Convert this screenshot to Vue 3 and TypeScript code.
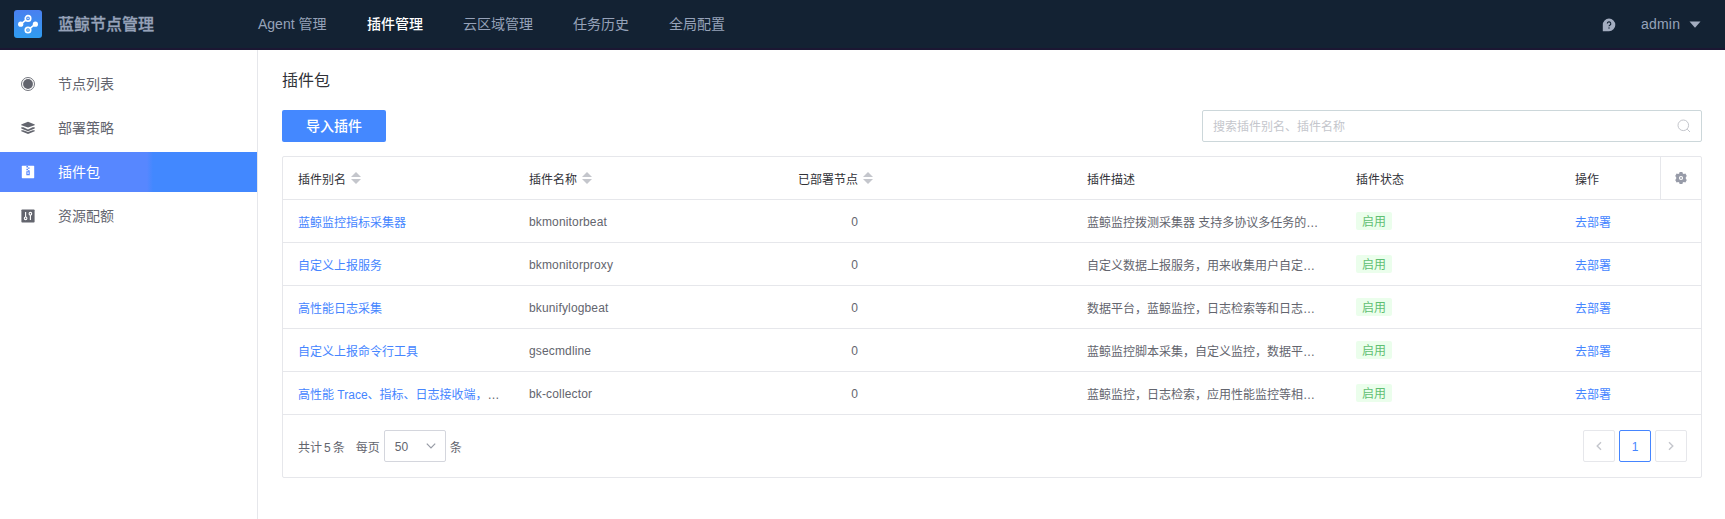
<script setup lang="ts">
interface Plugin {
  alias: string
  clipped?: boolean
  name: string
  nodes: number
  desc: string
}

const navs: string[] = ['Agent 管理', '插件管理', '云区域管理', '任务历史', '全局配置']
const activeNav = '插件管理'

const menus = [
  { icon: 'node', label: '节点列表' },
  { icon: 'strategy', label: '部署策略' },
  { icon: 'package', label: '插件包' },
  { icon: 'quota', label: '资源配额' },
]
const activeMenu = 'package'

const plugins: Plugin[] = [
  { alias: '蓝鲸监控指标采集器', name: 'bkmonitorbeat', nodes: 0, desc: '蓝鲸监控拨测采集器 支持多协议多任务的…' },
  { alias: '自定义上报服务', name: 'bkmonitorproxy', nodes: 0, desc: '自定义数据上报服务，用来收集用户自定…' },
  { alias: '高性能日志采集', name: 'bkunifylogbeat', nodes: 0, desc: '数据平台，蓝鲸监控，日志检索等和日志…' },
  { alias: '自定义上报命令行工具', name: 'gsecmdline', nodes: 0, desc: '蓝鲸监控脚本采集，自定义监控，数据平…' },
  { alias: '高性能 Trace、指标、日志接收端，', clipped: true, name: 'bk-collector', nodes: 0, desc: '蓝鲸监控，日志检索，应用性能监控等相…' },
]
</script>

<template>
  <div class="page">
    <header class="topbar">
      <div class="brand">
        <svg class="logo" width="28" height="28" viewBox="0 0 28 28">
          <defs>
            <linearGradient id="logoBg" x1="0" y1="0" x2="0" y2="1">
              <stop offset="0" stop-color="#4a80f0" />
              <stop offset="1" stop-color="#2f9cf0" />
            </linearGradient>
          </defs>
          <rect width="28" height="28" rx="3" fill="url(#logoBg)" />
          <g fill="none" stroke="#fff" stroke-width="1.7">
            <path d="M6.8 14.2 L11.8 10.2 M16.2 18.2 L21.4 14.2" />
            <circle cx="14" cy="8.4" r="2.7" />
            <circle cx="14" cy="20" r="2.7" />
          </g>
          <circle cx="14" cy="8.4" r="0.8" fill="#dbe9ff" />
          <circle cx="14" cy="20" r="0.8" fill="#dbe9ff" />
          <circle cx="6.7" cy="14.2" r="2.6" fill="#fff" />
          <circle cx="21.4" cy="14.2" r="2.6" fill="#fff" />
        </svg>
        <span class="brand-name">蓝鲸节点管理</span>
      </div>
      <nav class="nav">
        <a v-for="n in navs" :key="n" :class="{ active: n === activeNav }">{{ n }}</a>
      </nav>
      <div class="user">
        <svg class="help" width="14" height="14" viewBox="0 0 14 14">
          <path d="M7 0.6A6.3 6.3 0 1 1 7 13.2H0.8V7A6.3 6.3 0 0 1 7 0.6Z" fill="#a3adc0" />
          <path d="M5.3 5.6a1.75 1.75 0 1 1 2.5 1.6c-.6.3-.8.5-.8 1.1" fill="none" stroke="#132233" stroke-width="1.1" />
          <circle cx="7" cy="10" r="0.7" fill="#132233" />
        </svg>
        <span class="username">admin</span>
        <svg class="caret" width="12" height="7" viewBox="0 0 12 7"><path d="M0.5 0.5h11L6 6.8z" fill="#a3adc0" /></svg>
      </div>
    </header>

    <div class="body">
      <aside class="sidebar">
        <a v-for="m in menus" :key="m.icon" class="menu" :class="{ active: m.icon === activeMenu }">
          <svg width="14" height="14" viewBox="0 0 14 14">
            <template v-if="m.icon === 'node'">
              <circle cx="7" cy="7" r="6.5" fill="none" stroke="#63656e" stroke-width="0.9" />
              <circle cx="7" cy="7" r="4.9" fill="#63656e" />
            </template>
            <template v-else-if="m.icon === 'strategy'">
              <path d="M7 0.8 13.8 3.5 13.6 4.3 7 6.6 0.4 4.3 0.2 3.5z" fill="#63656e" />
              <path d="M0.3 6.2H2.4L7 8.4 11.6 6.2H13.7V7.4L7 10.2 0.3 7.4zM0.3 9.2H2.2L7 11.1 11.8 9.2H13.7V10.3L7 13 0.3 10.3z" fill="#63656e" />
            </template>
            <template v-else-if="m.icon === 'package'">
              <rect x="0.8" y="0.8" width="12.4" height="12.4" rx="0.6" fill="#fff" />
              <path d="M5.4 1h1.6v1.4H5.4zM7 2.4h1.6v1.4H7zM5.4 3.8H7v1.4H5.4zM7 5.2h1.6v1.4H7z" fill="#5787ff" />
              <path d="M5.9 6.8h2.3v2.8H5.9z" fill="none" stroke="#5787ff" stroke-width="1.1" />
            </template>
            <template v-else>
              <rect x="0.4" y="0.4" width="13.2" height="13.2" rx="0.8" fill="#63656e" />
              <path d="M4.6 3v5M9.4 6v5" stroke="#fff" stroke-width="1.1" />
              <circle cx="4.6" cy="9.3" r="1.3" fill="none" stroke="#fff" stroke-width="1.1" />
              <circle cx="9.4" cy="4.7" r="1.3" fill="none" stroke="#fff" stroke-width="1.1" />
            </template>
          </svg>
          <span>{{ m.label }}</span>
        </a>
      </aside>

      <main class="main">
        <h1 class="title">插件包</h1>
        <div class="toolbar">
          <button class="import">导入插件</button>
          <div class="search">
            <span>搜索插件别名、插件名称</span>
            <svg width="14" height="14" viewBox="0 0 14 14" fill="none" stroke="#c4c6cc" stroke-width="1">
              <circle cx="6.3" cy="6.3" r="5.3" />
              <path d="M10.2 10.2 13 13" />
            </svg>
          </div>
        </div>

        <section class="table">
          <div class="row head">
            <div class="cell">插件别名<i class="sort"></i></div>
            <div class="cell">插件名称<i class="sort"></i></div>
            <div class="cell count"><span>已部署节点</span><i class="sort"></i></div>
            <div class="cell">插件描述</div>
            <div class="cell">插件状态</div>
            <div class="cell">操作</div>
            <div class="setting">
              <svg width="12" height="12" viewBox="0 0 12 12">
                <path
                  fill="#979ba8"
                  fill-rule="evenodd"
                  d="M4.6 0h2.8l.4 1.5 1 .6 1.6-.5L11.8 4l-1 1.2v1.6l1 1.2-1.4 2.4-1.6-.5-1 .6L7.4 12H4.6l-.4-1.5-1-.6-1.6.5L.2 8l1-1.2V5.2L.2 4l1.4-2.4 1.6.5 1-.6zM6 3.9a2.1 2.1 0 1 0 0 4.2 2.1 2.1 0 0 0 0-4.2z"
                />
                <circle cx="6" cy="6" r="0.9" fill="#979ba8" />
              </svg>
            </div>
          </div>
          <div v-for="p in plugins" :key="p.name" class="row">
            <div class="cell">
              <span><a class="link">{{ p.alias }}</a><span v-if="p.clipped" class="dots">…</span></span>
            </div>
            <div class="cell latin">{{ p.name }}</div>
            <div class="cell latin count"><span>{{ p.nodes }}</span></div>
            <div class="cell">{{ p.desc }}</div>
            <div class="cell"><span class="tag">启用</span></div>
            <div class="cell"><a class="link">去部署</a></div>
          </div>
          <footer class="pager">
            <span class="total">共计<b>5</b>条</span>
            <span>每页</span>
            <div class="select">
              <span>50</span>
              <svg width="10" height="6" viewBox="0 0 10 6" fill="none" stroke="#979ba5" stroke-width="1.2"><path d="M0.8 0.6 5 4.9 9.2 0.6" /></svg>
            </div>
            <span>条</span>
            <div class="pages">
              <span class="pg"><svg width="6" height="10" viewBox="0 0 6 10"><path d="M5 1.2 1.2 5 5 8.8" /></svg></span>
              <span class="pg current">1</span>
              <span class="pg"><svg width="6" height="10" viewBox="0 0 6 10"><path d="M1 1.2 4.8 5 1 8.8" /></svg></span>
            </div>
          </footer>
        </section>
      </main>
    </div>
  </div>
</template>

<style>
body {
  margin: 0;
  background: #fff;
}
</style>

<style scoped>
.page {
  width: 1725px;
  height: 519px;
  overflow: hidden;
  display: flex;
  flex-direction: column;
  font-family: 'Liberation Sans', 'Noto Sans CJK SC', sans-serif;
  font-size: 12px;
  color: #63656e;
  box-sizing: border-box;
}
.page *,
.page *::before,
.page *::after {
  box-sizing: border-box;
}
.topbar {
  flex: none;
  height: 50px;
  display: flex;
  align-items: center;
  background: #132233;
  border-bottom: 2px solid #1b1733;
  color: #96a2b9;
  font-size: 14px;
}
.brand {
  width: 258px;
  padding-left: 14px;
  display: flex;
  align-items: center;
}
.brand-name {
  margin-left: 16px;
  padding-bottom: 2px;
  font-size: 16px;
  font-weight: 500;
  -webkit-text-stroke: 0.3px #96a2b9;
}
.nav {
  padding-bottom: 2px;
  display: flex;
  gap: 40px;
}
.nav a {
  white-space: nowrap;
}
.nav a:first-child {
  width: 69px;
}
.nav a.active {
  color: #fff;
  font-weight: 500;
}
.user {
  margin-left: auto;
  padding-right: 24px;
  display: flex;
  align-items: center;
}
.help {
  margin-top: 2px;
}
.username {
  margin-left: 25px;
  width: 48px;
  letter-spacing: 0.2px;
}
.body {
  flex: 1;
  display: flex;
  min-height: 0;
}
.sidebar {
  width: 258px;
  flex: none;
  padding-top: 14px;
  border-right: 1px solid #e6e7eb;
  display: flex;
  flex-direction: column;
  gap: 4px;
}
.menu {
  height: 40px;
  padding-left: 21px;
  display: flex;
  align-items: center;
  gap: 23px;
  font-size: 14px;
}
.menu span {
  padding-bottom: 2px;
}
.menu.active {
  color: #fff;
  background: linear-gradient(90deg, #5787ff 0, #5787ff 147px, #4288ff 153px);
}
.main {
  flex: 1;
  padding: 18px 23px 0 24px;
}
.title {
  margin: 0;
  height: 24px;
  line-height: 25px;
  font-size: 16px;
  font-weight: 400;
  color: #313238;
}
.toolbar {
  margin-top: 18px;
  display: flex;
  justify-content: space-between;
}
.import {
  width: 104px;
  height: 32px;
  padding: 0 0 2px;
  border: 0;
  border-radius: 2px;
  background: #4488ff;
  color: #fff;
  font-family: inherit;
  font-size: 14px;
  font-weight: 500;
}
.search {
  width: 500px;
  height: 32px;
  padding: 0 10px;
  border: 1px solid #ccd7da;
  border-radius: 2px;
  display: flex;
  align-items: center;
  justify-content: space-between;
  color: #c4c6cc;
}
.search span {
  padding-bottom: 2px;
}
.table {
  margin-top: 14px;
  width: 1420px;
  border: 1px solid #e6e7eb;
  border-radius: 2px;
}
.row {
  display: grid;
  grid-template-columns: 231px 231px 327px 269px 219px 100px 41px;
  height: 43px;
  border-bottom: 1px solid #e6e7eb;
}
.head {
  color: #313238;
}
.cell {
  padding-left: 15px;
  display: flex;
  align-items: center;
  white-space: nowrap;
}
.count {
  padding-left: 53px;
}
.count span {
  width: 60px;
  text-align: right;
}
.sort {
  width: 10px;
  height: 12px;
  margin-left: 5px;
  display: flex;
  flex-direction: column;
  justify-content: space-between;
}
.sort::before,
.sort::after {
  content: '';
  border: 5px solid transparent;
}
.sort::before {
  border-top: 0;
  border-bottom: 5px solid #c4c6cc;
}
.sort::after {
  border-bottom: 0;
  border-top: 5px solid #c4c6cc;
}
.setting {
  border-left: 1px solid #e6e7eb;
  display: flex;
  align-items: center;
  justify-content: center;
}
.link {
  color: #4585ff;
}
.latin {
  padding-top: 2px;
  letter-spacing: 0.15px;
}
.dots {
  font-family: 'Liberation Sans', sans-serif;
}
.tag {
  height: 18px;
  line-height: 20px;
  padding: 0 6px;
  border-radius: 2px;
  background: #ebfeec;
  color: #5fbf72;
}
.pager {
  height: 62px;
  padding: 0 14px 0 15px;
  display: flex;
  align-items: center;
}
.total {
  margin-right: 11px;
}
.total b {
  margin: 0 2px;
  font-weight: 400;
}
.select {
  width: 62px;
  height: 32px;
  margin: 0 4px;
  padding: 0 9px 0 10px;
  border: 1px solid #d4d6dd;
  border-radius: 2px;
  display: flex;
  align-items: center;
  justify-content: space-between;
}
.select span {
  padding-top: 2px;
}
.pages {
  margin-left: auto;
  display: flex;
  gap: 4px;
}
.pg {
  width: 32px;
  height: 32px;
  border: 1px solid #e6e7eb;
  border-radius: 2px;
  display: flex;
  align-items: center;
  justify-content: center;
}
.pg path {
  fill: none;
  stroke: #c4c6cc;
  stroke-width: 1.4;
}
.pg.current {
  padding-top: 2px;
  border-color: #4585ff;
  color: #4585ff;
}
</style>
